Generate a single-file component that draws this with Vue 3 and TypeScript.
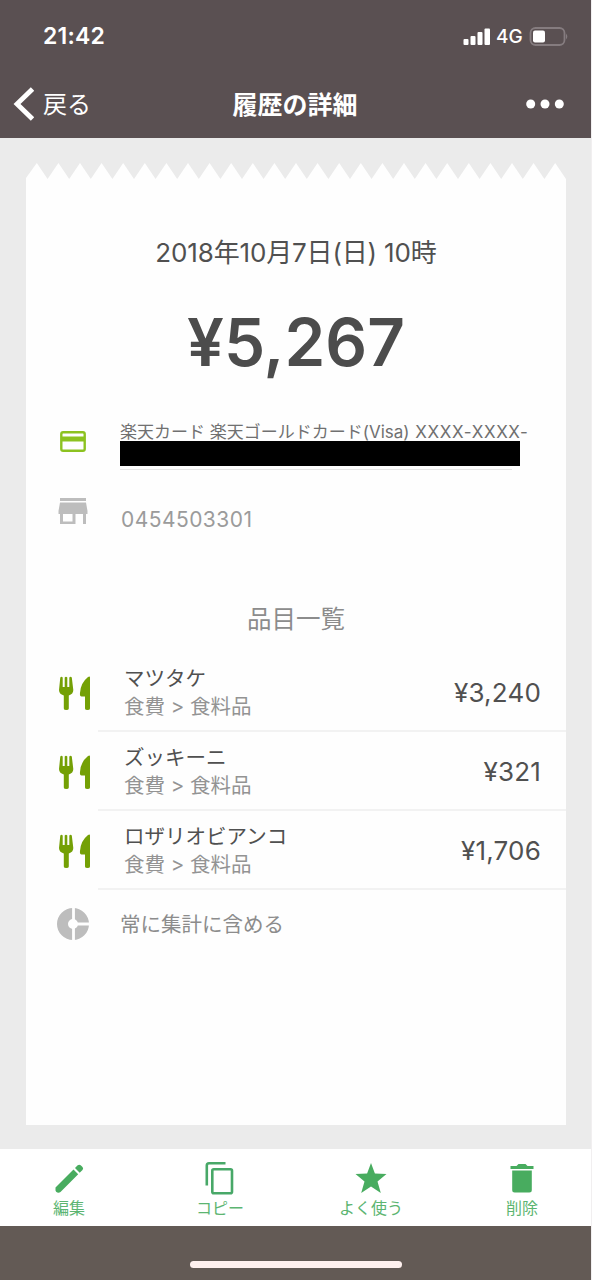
<script setup lang="ts">
interface Item {
  name: string
  category: string
  price: string
}

interface Action {
  id: string
  label: string
}

const items: Item[] = [
  { name: 'マツタケ', category: '食費 > 食料品', price: '¥3,240' },
  { name: 'ズッキーニ', category: '食費 > 食料品', price: '¥321' },
  { name: 'ロザリオビアンコ', category: '食費 > 食料品', price: '¥1,706' },
]

const actions: Action[] = [
  { id: 'edit', label: '編集' },
  { id: 'copy', label: 'コピー' },
  { id: 'star', label: 'よく使う' },
  { id: 'trash', label: '削除' },
]

// Torn paper edge: 25 teeth across a 540px wide receipt
const teeth = 25
const step = 540 / teeth
let edge = 'M0 17V15'
for (let i = 0; i < teeth; i++) {
  edge += `L${(i + 0.5) * step} 0L${(i + 1) * step} 16`
}
edge += 'V17Z'
</script>

<template>
  <div class="screen">
    <header class="top">
      <div class="status">
        <span class="clock">21:42</span>
        <div class="indicators">
          <svg class="signal" width="27" height="17" viewBox="0 0 27 17" fill="#fff">
            <rect x="0.500" y="11" width="5" height="6" rx="1" />
            <rect x="7.500" y="8" width="5" height="9" rx="1" />
            <rect x="14.500" y="4" width="5" height="13" rx="1" />
            <rect x="21.500" y="0.500" width="5.500" height="16.500" rx="1" />
          </svg>
          <span class="network">4G</span>
          <svg class="battery" width="40" height="19" viewBox="0 0 40 19">
            <rect x="1.500" y="1" width="34" height="17" rx="5" fill="none" stroke="#857c7f" stroke-width="1.800" />
            <path d="M37 6.500q2.600 3 0 6z" fill="#857c7f" />
            <rect x="4" y="3.500" width="12" height="12" rx="2" fill="#fff" />
          </svg>
        </div>
      </div>
      <nav class="nav">
        <div class="back">
          <svg width="22" height="34" viewBox="0 0 22 34">
            <path d="M20.500 2L5 17L20.500 32" fill="none" stroke="#fff" stroke-width="4.800" />
          </svg>
          <span>戻る</span>
        </div>
        <h1 class="title">履歴の詳細</h1>
        <svg class="more" width="38" height="10" viewBox="0 0 38 10" fill="#fff">
          <circle cx="4.700" cy="5" r="4.500" />
          <circle cx="19" cy="5" r="4.500" />
          <circle cx="33.300" cy="5" r="4.500" />
        </svg>
      </nav>
    </header>

    <main class="content">
      <svg class="edge" width="540" height="17" viewBox="0 0 540 17">
        <path :d="edge" fill="#fefefe" />
      </svg>
      <section class="receipt">
        <p class="date">2018年10月7日(日) 10時</p>
        <p class="total">¥5,267</p>

        <div class="row card-row">
          <svg class="card-icon" width="26" height="21" viewBox="0 0 26 21">
            <rect x="1.300" y="1.300" width="23.400" height="18.400" rx="1.800" fill="none" stroke="#8cc220" stroke-width="2.400" />
            <rect x="1" y="5.500" width="24" height="5" fill="#8cc220" />
          </svg>
          <div class="account">
            <span class="account-name">楽天カード 楽天ゴールドカード(Visa) <span class="number">XXXX-XXXX-</span></span>
            <div class="mask"></div>
            <div class="underline"></div>
          </div>
        </div>

        <div class="row shop-row">
          <svg class="shop-icon" width="30" height="27" viewBox="0 0 30 27" fill="#bdbdbd">
            <rect x="2" y="0" width="26" height="3" />
            <path d="M2 4.500H28L29.500 13V16H28V26H25V16H17.500V26H2V16H0.500V13ZM5 16V23.500H14.500V16Z" fill-rule="evenodd" />
          </svg>
          <span class="shop">0454503301</span>
        </div>

        <h2 class="heading">品目一覧</h2>

        <ul class="items">
          <li v-for="item in items" :key="item.name" class="item">
            <svg class="food" width="32" height="35" viewBox="0 0 32 35" fill="#74a005">
              <path d="M1.300 1.500Q2.500 0 3.700 1.500V11H5.700V1.500Q7 0 8.300 1.500V11H10.300V1.500Q11.600 0 12.800 1.500L14.300 14Q14.300 18 9.800 19.500V32.500Q9.800 34 7.300 34T4.800 32.500V19.500Q0 18 0 14Z" />
              <path d="M31 1.500V32.500Q31 34 28.500 34T26 32.500V20.500H22.500Q20.500 20.500 21 17Q21.500 7 29 1Q31 -.4 31 1.500Z" />
            </svg>
            <div class="detail">
              <div class="info">
                <span class="name">{{ item.name }}</span>
                <span class="category">{{ item.category }}</span>
              </div>
              <span class="price">{{ item.price }}</span>
            </div>
          </li>
        </ul>

        <div class="row sum-row">
          <svg class="sum-icon" width="32" height="32" viewBox="0 0 32 32">
            <circle cx="16" cy="16" r="10.500" fill="none" stroke="#bdbdbd" stroke-width="11" />
            <path d="M16.500 0V32M16.500 16H32" stroke="#fefefe" stroke-width="2.800" />
          </svg>
          <span class="sum">常に集計に含める</span>
        </div>
      </section>
    </main>

    <footer class="actions">
      <button v-for="action in actions" :key="action.id" class="action" type="button">
        <svg v-if="action.id === 'edit'" width="36" height="36" viewBox="0 0 36 36" fill="#48ac5f">
          <path d="M4.500 27.500L22.500 9.500L27.200 14.200L9.500 32Q8 33 6.300 32.500Q4.800 32 4.500 30.500ZM24 8L26.700 5.300Q28.300 4 29.700 5.300L31.500 7.100Q32.800 8.600 31.500 10L28.700 12.700Z" />
        </svg>
        <svg v-else-if="action.id === 'copy'" width="36" height="36" viewBox="0 0 36 36" fill="none" stroke="#48a868" stroke-width="2.600">
          <path d="M4.800 25.500V5.500Q4.800 3.300 7 3.300H23.500" />
          <rect x="10.300" y="9.300" width="19.700" height="24" rx="1.500" />
        </svg>
        <svg v-else-if="action.id === 'star'" width="36" height="36" viewBox="0 0 36 36" fill="#48ac5f">
          <path d="M18 3L21.900 13.500L33.500 14L24.500 21.500L27.800 33L18 26.600L8.200 33L11.500 21.500L2.500 14L14.100 13.500Z" />
        </svg>
        <svg v-else width="36" height="36" viewBox="0 0 36 36" fill="#48ac5f">
          <path d="M6.500 6H12.500L14.500 4H21.500L23.500 6H29.500V9H6.500ZM8.200 10.500H27.800V30Q27.800 32.500 25.300 32.500H10.700Q8.200 32.500 8.200 30Z" />
        </svg>
        <span class="label">{{ action.label }}</span>
      </button>
    </footer>
    <div class="home"><div class="indicator"></div></div>
  </div>
</template>

<style>
body {
  margin: 0;
}
</style>

<style scoped>
.screen {
  box-sizing: border-box;
  width: 592px;
  height: 1280px;
  display: flex;
  flex-direction: column;
  overflow: hidden;
  border-right: 1px solid #f1eff0;
  background: #ebebeb;
  font-family: Inter, "Noto Sans CJK JP", sans-serif;
  color: #505050;
}
p, h1, h2, ul {
  margin: 0;
  padding: 0;
}
svg {
  display: block;
  flex: none;
}
span, p, h1, h2 {
  white-space: nowrap;
}
.top {
  height: 138px;
  flex: none;
  background: #5a5052;
  color: #fff;
}
.status {
  height: 72px;
  display: flex;
  justify-content: space-between;
  align-items: center;
  box-sizing: border-box;
  padding: 0 22px 0 43px;
}
.clock {
  font-size: 23px;
  font-weight: 600;
  line-height: 28px;
  letter-spacing: 0.2px;
}
.indicators {
  display: flex;
  align-items: center;
}
.network {
  width: 33px;
  margin: 2px 0 0 6px;
  font-size: 19px;
  font-weight: 500;
  line-height: 24px;
}
.nav {
  height: 64px;
  display: grid;
  grid-template-columns: 1fr auto 1fr;
  align-items: center;
  padding: 0 27px 0 12px;
}
.back {
  display: flex;
  align-items: center;
  gap: 9px;
  font-size: 24px;
  font-weight: 390;
  line-height: 32px;
}
.back span,
.title {
  padding-top: 2px;
}
.title {
  font-size: 25px;
  font-weight: 700;
  line-height: 32px;
  margin-left: 14px;
}
.more {
  justify-self: end;
}
.content {
  height: 1011px;
  flex: none;
  box-sizing: border-box;
  padding: 25px 25px 24px 26px;
}
.receipt {
  width: 540px;
  height: 946px;
  display: flex;
  flex-direction: column;
  background: #fefefe;
}
.edge {
  margin-bottom: -1px;
}
.date {
  margin-top: 54px;
  text-align: center;
  font-size: 26px;
  font-weight: 390;
  line-height: 40px;
  letter-spacing: -0.15px;
}
.total {
  margin-top: 30px;
  text-align: center;
  font-size: 65.500px;
  font-weight: 600;
  line-height: 80px;
  color: #4c4c4c;
}
.row {
  display: flex;
}
.card-row {
  margin-top: 38px;
  height: 51px;
  padding-left: 34px;
}
.card-icon {
  margin-top: 10px;
}
.account {
  margin-left: 34px;
  display: flex;
  flex-direction: column;
}
.account-name {
  height: 20px;
  font-size: 17px;
  font-weight: 390;
  line-height: 23px;
  color: #707070;
}
.number {
  margin-left: 1px;
  letter-spacing: 0.65px;
}
.mask {
  z-index: 1;
  width: 400px;
  height: 25px;
  background: #000;
}
.underline {
  width: 392px;
  height: 1px;
  margin-top: 3px;
  background: #e6e6e6;
}
.shop-row {
  height: 42px;
  margin-top: 26px;
  padding-left: 32px;
}
.shop {
  margin: 9px 0 0 33px;
  font-size: 21px;
  line-height: 26px;
  letter-spacing: 0.45px;
  color: #9b9b9b;
}
.heading {
  margin-top: 59px;
  text-align: center;
  font-size: 24.500px;
  font-weight: 390;
  line-height: 40px;
  color: #8c8c8c;
}
.items {
  list-style: none;
  margin-top: 14px;
}
.item {
  height: 79px;
  display: flex;
  padding-left: 33px;
}
.food {
  margin-top: 23px;
}
.detail {
  flex: 1;
  margin-left: 7px;
  box-sizing: border-box;
  display: flex;
  justify-content: space-between;
  padding: 12px 25px 0 26px;
  border-bottom: 2px solid #f2f2f2;
}
.info {
  display: flex;
  flex-direction: column;
  font-size: 20.500px;
  font-weight: 390;
  line-height: 28px;
}
.category {
  color: #939393;
}
.price {
  margin-top: 12px;
  font-size: 26px;
  line-height: 32px;
  letter-spacing: 0.2px;
}
.sum-row {
  align-items: center;
  height: 67px;
  padding-left: 31px;
}
.sum {
  margin: 2px 0 0 31px;
  font-size: 20.500px;
  font-weight: 390;
  line-height: 30px;
  color: #8c8c8c;
}
.actions {
  height: 77px;
  flex: none;
  display: flex;
  justify-content: space-between;
  box-sizing: border-box;
  padding: 11px 29px 0 29px;
  background: #fff;
}
.action {
  width: 80px;
  display: flex;
  flex-direction: column;
  align-items: center;
  padding: 0;
  border: 0;
  background: none;
  font: inherit;
  font-weight: 390;
  color: #5cb571;
}
.label {
  margin-top: 1px;
  font-size: 16px;
  line-height: 22px;
}
.home {
  flex: 1;
  display: flow-root;
  background: #635a55;
}
.indicator {
  width: 212px;
  height: 7px;
  margin: 35px auto 0;
  border-radius: 4px;
  background: #fff1ef;
}
</style>
